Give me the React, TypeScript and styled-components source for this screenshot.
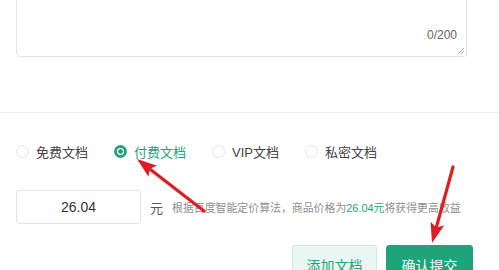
import styled, { createGlobalStyle } from 'styled-components';

const GREEN = '#1ea37b';

const GlobalStyle = createGlobalStyle`
  html, body {
    margin: 0;
    padding: 0;
    background: #fff;
    overflow: hidden;
  }
  body {
    font-family: Arial, "Liberation Sans", "Noto Sans CJK SC", sans-serif;
    color: #333;
  }
`;

const Page = styled.div`
  position: relative;
  width: 499px;
  height: 270px;
  overflow: hidden;
`;

const TextAreaBox = styled.div`
  position: relative;
  margin: -40px 32px 0 16px;
  height: 97px;
  border: 1px solid #e4e4e4;
  border-radius: 4px;
  box-sizing: border-box;
`;

const Counter = styled.span`
  position: absolute;
  right: 9px;
  bottom: 14px;
  font-size: 12px;
  color: #666;
`;

const ResizeGrip = styled.svg`
  position: absolute;
  right: 1px;
  bottom: 1px;
`;

const Divider = styled.div`
  margin-top: 55px;
  height: 1px;
  background: #efefef;
`;

const RadioRow = styled.div`
  display: flex;
  align-items: center;
  padding: 31px 0 0 16px;
  height: 15px;
`;

const RadioItem = styled.label<{ $checked?: boolean }>`
  display: flex;
  align-items: center;
  gap: 7px;
  margin-right: 26px;
  font-size: 13px;
  color: ${(p) => (p.$checked ? GREEN : '#444')};
`;

const RadioDot = styled.span<{ $checked?: boolean }>`
  width: 13px;
  height: 13px;
  border-radius: 50%;
  box-sizing: border-box;
  border: 1px solid ${(p) => (p.$checked ? GREEN : '#e6e6e6')};
  background: ${(p) =>
    p.$checked
      ? `radial-gradient(circle, ${GREEN} 0 2px, #fff 2.6px 3.3px, ${GREEN} 3.9px)`
      : '#fff'};
`;

const PriceRow = styled.div`
  display: flex;
  align-items: center;
  padding: 31px 0 0 16px;
`;

const PriceInput = styled.div`
  width: 125px;
  height: 34px;
  border: 1px solid #e3e3e3;
  border-radius: 3px;
  box-sizing: border-box;
  display: flex;
  align-items: center;
  justify-content: center;
  font-size: 14px;
  color: #333;
`;

const Unit = styled.span`
  margin-left: 9px;
  font-size: 13px;
  color: #555;
`;

const Hint = styled.span`
  margin-left: 9px;
  font-size: 10.9px;
  color: #8f8f8f;
  white-space: nowrap;
`;

const HintPrice = styled.span`
  color: ${GREEN};
`;

const Actions = styled.div`
  display: flex;
  justify-content: flex-end;
  gap: 9px;
  padding: 21px 26px 0 0;
`;

const Button = styled.div<{ $primary?: boolean }>`
  height: 40px;
  box-sizing: border-box;
  border-radius: 3px;
  display: flex;
  align-items: center;
  justify-content: center;
  font-size: 14px;
  border: 1px solid ${(p) => (p.$primary ? GREEN : '#cdeadf')};
  background: ${(p) => (p.$primary ? GREEN : '#e9f6f1')};
  color: ${(p) => (p.$primary ? '#fff' : GREEN)};
`;

const Overlay = styled.svg`
  position: absolute;
  left: 0;
  top: 0;
  pointer-events: none;
`;

const radios = [
  { label: '免费文档' },
  { label: '付费文档', checked: true },
  { label: 'VIP文档' },
  { label: '私密文档' },
];

const Arrow = ({ x1, y1, x2, y2 }: { x1: number; y1: number; x2: number; y2: number }) => {
  const dx = x2 - x1;
  const dy = y2 - y1;
  const len = Math.hypot(dx, dy);
  const ux = dx / len;
  const uy = dy / len;
  const headLen = 20;
  const headW = 7;
  const bx = x2 - ux * headLen;
  const by = y2 - uy * headLen;
  const px = -uy;
  const py = ux;
  return (
    <g>
      <line x1={x1} y1={y1} x2={bx + ux * 3} y2={by + uy * 3} stroke="#e01b22" strokeWidth={3.2} strokeLinecap="round" />
      <polygon
        points={`${x2},${y2} ${bx + px * headW},${by + py * headW} ${bx + ux * 4},${by + uy * 4} ${bx - px * headW},${by - py * headW}`}
        fill="#e01b22"
      />
    </g>
  );
};

export default function App() {
  return (
    <Page>
      <GlobalStyle />
      <TextAreaBox>
        <Counter>0/200</Counter>
        <ResizeGrip width="8" height="8" viewBox="0 0 8 8">
          <path d="M7 1 L1 7 M7 4 L4 7" stroke="#aaa" strokeWidth="1" />
        </ResizeGrip>
      </TextAreaBox>
      <Divider />
      <RadioRow>
        {radios.map((r) => (
          <RadioItem key={r.label} $checked={r.checked}>
            <RadioDot $checked={r.checked} />
            {r.label}
          </RadioItem>
        ))}
      </RadioRow>
      <PriceRow>
        <PriceInput>26.04</PriceInput>
        <Unit>元</Unit>
        <Hint>
          根据百度智能定价算法，商品价格为<HintPrice>26.04元</HintPrice>将获得更高收益
        </Hint>
      </PriceRow>
      <Actions>
        <Button style={{ width: 85 }}>添加文档</Button>
        <Button $primary style={{ width: 87 }}>确认提交</Button>
      </Actions>
      <Overlay width="499" height="270" viewBox="0 0 499 270">
        <Arrow x1={204} y1={211} x2={137} y2={159} />
        <Arrow x1={453} y1={167} x2={432} y2={243} />
      </Overlay>
    </Page>
  );
}
